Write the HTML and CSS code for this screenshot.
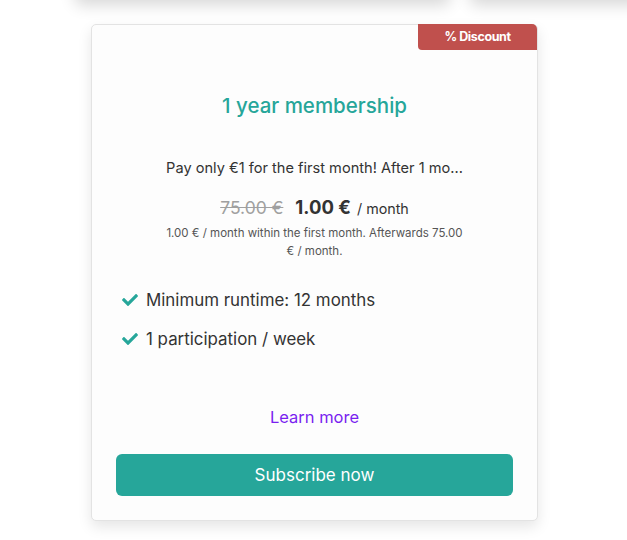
FILE: index.html
```html
<!DOCTYPE html>
<html>
<head>
<meta charset="utf-8">
<link rel="stylesheet" href="styles.css">
</head>
<body>
<div class="page">
  <div class="prev-row">
    <div class="prev-card prev-a"></div>
    <div class="prev-card prev-b"></div>
  </div>
  <div class="card">
    <div class="badge-row"><span class="badge">% Discount</span></div>
    <h2 class="title">1 year membership</h2>
    <p class="desc">Pay only €1 for the first month! After 1 mo...</p>
    <div class="price">
      <span class="old">75.00 €</span>
      <span class="new">1.00 €</span>
      <span class="per">/ month</span>
    </div>
    <p class="note">1.00 € / month within the first month. Afterwards 75.00 € / month.</p>
    <ul class="features">
      <li><svg class="check" viewBox="0 0 512 512"><path d="M173.898 439.404l-166.4-166.4c-9.997-9.997-9.997-26.206 0-36.204l36.203-36.204c9.997-9.998 26.207-9.998 36.204 0L192 312.690 432.095 72.596c9.997-9.997 26.207-9.997 36.204 0l36.203 36.204c9.997 9.997 9.997 26.206 0 36.204l-294.4 294.401c-9.998 9.997-26.207 9.997-36.204-.001z"/></svg>Minimum runtime: 12 months</li>
      <li><svg class="check" viewBox="0 0 512 512"><path d="M173.898 439.404l-166.4-166.4c-9.997-9.997-9.997-26.206 0-36.204l36.203-36.204c9.997-9.998 26.207-9.998 36.204 0L192 312.690 432.095 72.596c9.997-9.997 26.207-9.997 36.204 0l36.203 36.204c9.997 9.997 9.997 26.206 0 36.204l-294.4 294.401c-9.998 9.997-26.207 9.997-36.204-.001z"/></svg>1 participation / week</li>
    </ul>
    <a class="learn" href="#">Learn more</a>
    <button class="subscribe">Subscribe now</button>
  </div>
</div>
</body>
</html>
```
FILE: styles.css
```css
* { box-sizing: border-box; }
html, body { margin: 0; padding: 0; background: #ffffff; }
body {
  font-family: "Inter", "Lato", sans-serif;
  color: #333;
  overflow: hidden;
  height: 540px;
}
.page {
  width: 627px;
  height: 540px;
  overflow: hidden;
}
.prev-row {
  display: flex;
  gap: 20px;
  height: 24px;
  margin-left: 75px;
}
.prev-card {
  height: 100px;
  margin-top: -101px;
  background: #fff;
  border-radius: 6px;
  box-shadow: 0 6px 16px rgba(0,0,0,0.16);
  flex: none;
}
.prev-a { width: 375px; }
.prev-b { width: 200px; }
.card {
  margin-left: 91px;
  width: 447px;
  height: 497px;
  background: #fdfdfd;
  border: 1px solid #e3e3e3;
  border-radius: 5px;
  box-shadow: 0 6px 14px rgba(0,0,0,0.10);
  display: flex;
  flex-direction: column;
  align-items: center;
  padding: 0 24px 24px;
}
.badge-row {
  align-self: stretch;
  display: flex;
  justify-content: flex-end;
  margin-right: -24px;
  margin-top: -1px;
}
.badge {
  background: #c0504d;
  color: #fff;
  font-weight: 700;
  font-size: 12.5px;
  width: 119px;
  height: 26px;
  line-height: 25px;
  text-align: center;
  border-radius: 0 5px 0 4px;
  letter-spacing: -0.4px;
}
.title {
  margin: 43px 0 0;
  font-size: 20.5px;
  font-weight: 500;
  color: #26a69a;
  line-height: 26px;
}
.desc {
  margin: 39px 0 0;
  font-size: 14.6px;
  line-height: 20px;
  color: #333;
}
.price {
  margin-top: 17px;
  display: flex;
  align-items: baseline;
  gap: 6px;
  line-height: 24px;
}
.old {
  color: #a0a0a0;
  font-size: 17.5px;
  text-decoration: line-through;
  margin-right: 6px;
}
.new {
  font-size: 18.5px;
  font-weight: 700;
  color: #333;
}
.per { font-size: 14.3px; color: #333; }
.note {
  margin: 3px 0 0;
  width: 299px;
  text-align: center;
  font-size: 11.5px;
  line-height: 18px;
  color: #555;
}
.features {
  list-style: none;
  margin: 28px 0 0;
  padding: 0 0 0 5px;
  align-self: stretch;
  display: flex;
  flex-direction: column;
  gap: 15px;
}
.features li {
  display: flex;
  align-items: center;
  gap: 7px;
  font-size: 16.9px;
  line-height: 24px;
  color: #333;
}
.check {
  width: 18px;
  height: 16px;
  fill: #26a69a;
  flex: none;
}
.learn {
  margin-top: auto;
  font-size: 16.5px;
  color: #7a1ff0;
  text-decoration: none;
  line-height: 24px;
}
.subscribe {
  margin-top: 25px;
  align-self: stretch;
  height: 42px;
  border: none;
  border-radius: 6px;
  background: #26a69a;
  color: #fff;
  font-family: inherit;
  font-size: 17px;
}
```
